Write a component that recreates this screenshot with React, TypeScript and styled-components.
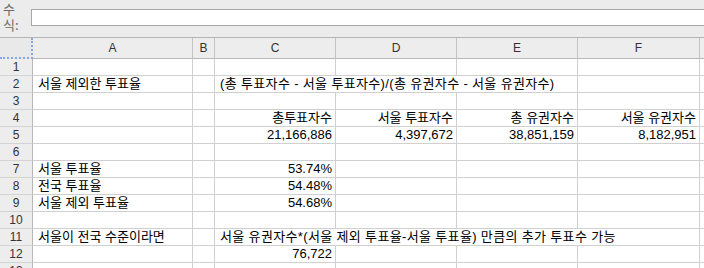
import React from 'react'
import styled, { createGlobalStyle } from 'styled-components'

const GlobalStyle = createGlobalStyle`
    html, body {
        margin: 0;
        padding: 0;
        background: #ffffff;
    }
    body {
        font-family: "Liberation Sans", "Noto Sans CJK KR", sans-serif;
        font-size: 13px;
        color: #000;
        overflow: hidden;
    }
`

const Sheet = styled.div`
    width: 704px;
    height: 268px;
    overflow: hidden;
    background: #ffffff;
`

const FormulaBar = styled.div`
    display: flex;
    align-items: flex-start;
    height: 38px;
    box-sizing: border-box;
    background: #ececec;
    border-bottom: solid 1px #b5b5b5;
`

const FormulaLabel = styled.div`
    display: flex;
    flex-direction: column;
    gap: 1px;
    width: 31px;
    box-sizing: border-box;
    padding-left: 3px;
    padding-top: 1px;
    font-family: "Noto Sans CJK KR", sans-serif;
    font-size: 13px;
    color: #6a6a6a;
`

const LabelLine = styled.span`
    display: block;
    height: 15px;
    line-height: 15px;
`

const FormulaInput = styled.div`
    flex-grow: 1;
    margin-top: 9px;
    height: 17px;
    box-sizing: border-box;
    background: #ffffff;
    border: solid 1px #a7a7a7;
    border-right: none;
`

const Grid = styled.div`
    display: grid;
    grid-template-columns: 33px 160px 22px 121px 121px 121px 122px 40px;
    grid-template-rows: 21px repeat(13, 17px);
`

const Corner = styled.div`
    box-sizing: border-box;
    background: #e9e9e9;
    border-right: dotted 2px #8aa6e0;
    border-bottom: dotted 2px #8aa6e0;
`

const ColHead = styled.div`
    box-sizing: border-box;
    display: flex;
    align-items: center;
    justify-content: center;
    background: #ededed;
    border-right: solid 1px #c3c3c3;
    border-bottom: solid 1px #b8b8b8;
    font-size: 12px;
    color: #333;
`

const RowHead = styled.div`
    box-sizing: border-box;
    display: flex;
    align-items: center;
    justify-content: center;
    background: #ededed;
    border-right: solid 1px #b8b8b8;
    border-bottom: solid 1px #d4d4d4;
    font-size: 12px;
    color: #333;
`

const Cell = styled.div<{ $align?: 'left' | 'right'; $span?: number }>`
    box-sizing: border-box;
    grid-column: span ${p => p.$span || 1};
    display: flex;
    align-items: center;
    justify-content: ${p => (p.$align === 'right' ? 'flex-end' : 'flex-start')};
    padding: 0 3px 0 5px;
    border-right: solid 1px #d0d0d0;
    border-bottom: solid 1px #d0d0d0;
    white-space: nowrap;
    overflow: visible;
    font-size: 13px;
    line-height: 16px;
    letter-spacing: ${p => (p.$span ? '0.35px' : '0')};
`

type CellData = { text?: string; align?: 'left' | 'right'; span?: number }

const columns = ['A', 'B', 'C', 'D', 'E', 'F', '']

const rows: CellData[][] = [
    [{}, {}, {}, {}, {}, {}, {}],
    [{ text: '서울 제외한 투표율' }, {}, { text: '(총 투표자수 - 서울 투표자수)/(총 유권자수 - 서울 유권자수)', span: 3 }, {}, {}],
    [{}, {}, {}, {}, {}, {}, {}],
    [{}, {}, { text: '총투표자수', align: 'right' }, { text: '서울 투표자수', align: 'right' }, { text: '총 유권자수', align: 'right' }, { text: '서울 유권자수', align: 'right' }, {}],
    [{}, {}, { text: '21,166,886', align: 'right' }, { text: '4,397,672', align: 'right' }, { text: '38,851,159', align: 'right' }, { text: '8,182,951', align: 'right' }, {}],
    [{}, {}, {}, {}, {}, {}, {}],
    [{ text: '서울 투표율' }, {}, { text: '53.74%', align: 'right' }, {}, {}, {}, {}],
    [{ text: '전국 투표율' }, {}, { text: '54.48%', align: 'right' }, {}, {}, {}, {}],
    [{ text: '서울 제외 투표율' }, {}, { text: '54.68%', align: 'right' }, {}, {}, {}, {}],
    [{}, {}, {}, {}, {}, {}, {}],
    [{ text: '서울이 전국 수준이라면' }, {}, { text: '서울 유권자수*(서울 제외 투표율-서울 투표율) 만큼의 추가 투표수 가능', span: 4 }, {}],
    [{}, {}, { text: '76,722', align: 'right' }, {}, {}, {}, {}],
    [{}, {}, {}, {}, {}, {}, {}],
]

const App = () => {
    return (
        <Sheet>
            <GlobalStyle />
            <FormulaBar>
                <FormulaLabel>
                    <LabelLine>수</LabelLine>
                    <LabelLine>식:</LabelLine>
                </FormulaLabel>
                <FormulaInput />
            </FormulaBar>
            <Grid>
                <Corner />
                {columns.map((c, i) => (
                    <ColHead key={i}>{c}</ColHead>
                ))}
                {rows.map((row, r) => (
                    <React.Fragment key={r}>
                        <RowHead>{r + 1}</RowHead>
                        {row.map((cell, i) => (
                            <Cell key={i} $align={cell.align} $span={cell.span}>
                                {cell.text}
                            </Cell>
                        ))}
                    </React.Fragment>
                ))}
            </Grid>
        </Sheet>
    )
}

export default App
